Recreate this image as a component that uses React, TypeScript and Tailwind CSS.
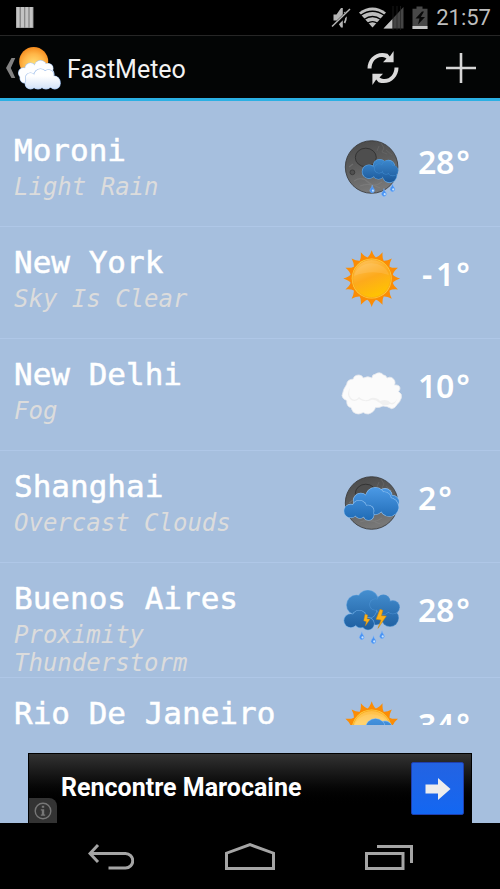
import type { ReactNode } from "react";

type Blob = [number, number, number];

const SUN_X = 30.7;
const SUN_Y = 29.6;

// 16 spikes around the disc, slightly concave on both sides
const sunRays = Array.from({ length: 16 }, (_, i) => {
	const step = Math.PI / 8;
	const point = (angle: number, r: number) =>
		`${(SUN_X + r * Math.sin(angle)).toFixed(2)} ${(SUN_Y - r * Math.cos(angle)).toFixed(2)}`;
	const a = i * step;
	return `${i === 0 ? "M" : "L"}${point(a - step / 2, 21.5)} Q${point(a - step / 5, 23)} ${point(a, 28.4)} Q${point(a + step / 5, 23)} ${point(a + step / 2, 21.5)}`;
}).join(" ");

const Defs = () => (
	<svg width="0" height="0" className="absolute" aria-hidden="true">
		<defs>
			<linearGradient id="moon" x1="0" y1="0" x2="0.3" y2="1">
				<stop offset="0" stopColor="#484848" />
				<stop offset="0.5" stopColor="#5c5c5c" />
				<stop offset="1" stopColor="#777777" />
			</linearGradient>
			<linearGradient id="blue" gradientUnits="userSpaceOnUse" x1="0" y1="14" x2="0" y2="48">
				<stop offset="0" stopColor="#4c9ae6" />
				<stop offset="1" stopColor="#1f6ab4" />
			</linearGradient>
			<linearGradient id="rainBlue" gradientUnits="userSpaceOnUse" x1="0" y1="22" x2="0" y2="46">
				<stop offset="0" stopColor="#3d8ad0" />
				<stop offset="1" stopColor="#1a5697" />
			</linearGradient>
			<linearGradient id="darkBlue" gradientUnits="userSpaceOnUse" x1="0" y1="5" x2="0" y2="48">
				<stop offset="0" stopColor="#458fd0" />
				<stop offset="1" stopColor="#1a5a9c" />
			</linearGradient>
			<linearGradient id="sunDisc" x1="0.2" y1="0" x2="0.6" y2="1">
				<stop offset="0" stopColor="#fdc25a" />
				<stop offset="0.5" stopColor="#fdaa1c" />
				<stop offset="1" stopColor="#ffc400" />
			</linearGradient>
			<linearGradient id="paleSun" x1="0" y1="0" x2="0" y2="1">
				<stop offset="0" stopColor="#ffbf45" />
				<stop offset="0.4" stopColor="#ffd166" />
				<stop offset="1" stopColor="#ffb000" />
			</linearGradient>
			<radialGradient id="logoSun" cx="0.5" cy="0.6" r="0.6">
				<stop offset="0" stopColor="#ffe27a" />
				<stop offset="0.6" stopColor="#ffb648" />
				<stop offset="1" stopColor="#f58a1c" />
			</radialGradient>
			<linearGradient id="logoCloud" gradientUnits="userSpaceOnUse" x1="0" y1="24" x2="0" y2="44">
				<stop offset="0.3" stopColor="#ffffff" />
				<stop offset="1" stopColor="#cfe0f7" />
			</linearGradient>
		</defs>
	</svg>
);

const Cloud = ({ blobs, fill = "url(#blue)", edge = "#8fc0f0" }: { blobs: Blob[]; fill?: string; edge?: string }) => (
	<g>
		{blobs.map(([x, y, r]) => (
			<circle key={`e${x}-${y}`} cx={x} cy={y} r={r} fill={edge} />
		))}
		{blobs.map(([x, y, r]) => (
			<circle key={`f${x}-${y}`} cx={x} cy={y} r={r - 0.6} fill={fill} />
		))}
	</g>
);

const Moon = () => (
	<g>
		<circle cx="30.6" cy="30" r="26.3" fill="url(#moon)" stroke="#343434" strokeWidth="0.8" />
		<path d="M40 6l3 5-2 4 5 2M45 13l6 5M38 9l-2 5" stroke="#6a6a6a" strokeWidth="1" fill="none" opacity="0.6" />
		<path d="M13 44q8-5 14 1t14 0M19 49q10-4 20 2M8 30l4-3" stroke="#8a8a8a" strokeWidth="1.2" fill="none" opacity="0.4" />
		<ellipse cx="24.8" cy="20.5" rx="10.5" ry="9.3" fill="#4e4e4e" stroke="#303030" strokeWidth="0.9" />
		<circle cx="11.4" cy="35.3" r="2.4" fill="#505050" stroke="#333333" strokeWidth="0.8" />
	</g>
);

const Drop = ({ x, y }: { x: number; y: number }) => (
	<g>
		<path d={`M${x} ${y - 4}Q${x + 0.4} ${y - 1.6} ${x + 1.9} ${y}A2.4 2.4 0 1 1 ${x - 1.9} ${y}Q${x - 0.4} ${y - 1.6} ${x} ${y - 4}Z`} fill="#4692f4" stroke="#86b8f8" strokeWidth="0.4" />
		<circle cx={x + 0.7} cy={y + 1.7} r="1.1" fill="#c5e2ff" />
	</g>
);

const Sun = ({ disc }: { disc: string }) => (
	<g>
		<path d={`${sunRays}Z`} fill="#fb8c05" />
		<circle cx={SUN_X} cy={SUN_Y} r="20" fill="#ffd23f" />
		<circle cx={SUN_X} cy={SUN_Y} r="19" fill={disc} stroke="#f59a16" strokeWidth="0.6" />
		<path d="M13 27a18 16 0 0 1 35-1q-17-6-35 1Z" fill="#ffffff" opacity="0.1" />
	</g>
);

const FOG = "M1 34.7Q2 28 5.7 23.3Q6 18.5 12.3 18Q13 14 18 14Q21 14 22.3 17Q27 14.5 31 17Q31 13.5 34 13.3Q39 10 42.5 14Q45 14 46 17Q51 14.5 53.7 19.7Q54.5 22 53.5 24Q58.5 23.5 59 27Q59 29 57.5 30.5Q61.5 33 60.3 37Q59 41 56.3 43.3Q54 47.5 50.7 47.7Q46 45 42 45Q38 47 34.5 46.5Q33 51.5 27.3 53Q24.5 53 22.3 51.5Q17 54 15 52.5Q11.5 52 10 46.5Q5.5 46 5.7 39.5Q1.5 38 1 34.7Z";

const MoonRain = () => (
	<>
		<Moon />
		<Cloud blobs={[[28, 34.7, 7.2], [38.7, 28.9, 7], [47.5, 29.4, 6.6], [48.6, 38.3, 7.6], [37.5, 36.3, 6.2]]} fill="url(#rainBlue)" edge="#5fa5e4" />
		<Cloud blobs={[[38, 31.5, 5], [46, 29.4, 5.8], [51.8, 33.6, 5.6], [45, 33.5, 4]]} fill="url(#rainBlue)" edge="#3f88cc" />
		<Drop x={31.2} y={52} />
		<Drop x={43} y={55.5} />
		<Drop x={51.5} y={50.7} />
	</>
);

const Fog = () => (
	<>
		<path d={FOG} fill="#fbfbfb" stroke="#e6e9ed" strokeWidth="0.8" />
		<path d="M9 27Q7 34 10 37Q14 41 18 36Q24 42 30 37Q36 36 39 40Q46 37 50 42Q54 42 56 38Q54 45 49 43Q43 46 38 41.500Q34 38 30 39Q24 42 18 38Q13 42 9 38Q5 33 9 27Z" fill="#f0f0f0" />
	</>
);

const MoonClouds = () => (
	<>
		<Moon />
		<Cloud blobs={[[44, 22.5, 7.4], [51.5, 29, 7]]} />
		<Cloud blobs={[[19.8, 27.5, 7.8], [34.3, 24.2, 10.2], [43.2, 26, 7.5], [48.3, 34, 9.8], [34, 33, 9], [24, 34, 7]]} />
		<Cloud blobs={[[9.8, 38, 7.2], [18.3, 34.8, 7.8], [27, 38, 6.3], [27.6, 41.8, 5.8], [19, 39.8, 6]]} />
	</>
);

const Storm = () => (
	<>
		<Cloud blobs={[[49, 33, 8.8], [35, 31, 9]]} fill="url(#darkBlue)" edge="#3f83c2" />
		<Cloud blobs={[[15.5, 20, 10.3], [26.8, 15.7, 10.8], [27, 25, 9]]} fill="url(#darkBlue)" edge="#5fa0dc" />
		<Cloud blobs={[[34.3, 19.5, 6], [42.4, 16.5, 7], [51.8, 22.3, 7], [42, 23, 7]]} fill="url(#darkBlue)" edge="#4a8fd0" />
		<Cloud blobs={[[9.8, 35.6, 7.2], [18.2, 32.8, 7.8], [27, 38.7, 6.6], [19.5, 37, 6.2]]} fill="url(#darkBlue)" edge="#6aaae4" />
		<path d="M39 24.3l2.9 1-1.5 5.4 5 .3L37 43.3 40 35l-5-.7z" fill="#fbb11a" stroke="#c98208" strokeWidth="0.5" />
		<path d="M24 29.3l2.7.7-.7 3.7 3 .6-4.7 6.7 1-4.3-2.6-1z" fill="#fbb11a" stroke="#c98208" strokeWidth="0.4" />
		<Drop x={20.8} y={50.7} />
		<Drop x={32.5} y={54.7} />
		<Drop x={41} y={49.7} />
	</>
);

const SunCloud = () => (
	<>
		<Sun disc="url(#paleSun)" />
		<Cloud blobs={[[44, 28, 7.4], [51, 34, 7]]} />
		<Cloud blobs={[[19.8, 34, 7.8], [34.5, 28.4, 10.2], [48.3, 38, 9.8], [34, 38, 9]]} />
	</>
);

type City = { name: string; sky?: string; temp: string; icon: ReactNode };

const cities: City[] = [
	{ name: "Moroni", sky: "Light Rain", temp: "28°", icon: <MoonRain /> },
	{ name: "New York", sky: "Sky Is Clear", temp: "-1°", icon: <Sun disc="url(#sunDisc)" /> },
	{ name: "New Delhi", sky: "Fog", temp: "10°", icon: <Fog /> },
	{ name: "Shanghai", sky: "Overcast Clouds", temp: "2°", icon: <MoonClouds /> },
	{ name: "Buenos Aires", sky: "Proximity Thunderstorm", temp: "28°", icon: <Storm /> },
	{ name: "Rio De Janeiro", temp: "34°", icon: <SunCloud /> },
];

const StatusBar = () => (
	<div className="flex h-9 shrink-0 items-center justify-between border-b border-[#262626] bg-black pl-4 pr-[9px]">
		<svg width="18" height="22" viewBox="0 0 18 22" aria-hidden="true">
			<path d="M0 0h17.500v21H0z" fill="#8a8a8a" />
			<path d="M.5 0h3v20.500h-3zM5 0h3v20.500H5zM9.300 0h3v20.500h-3zM13.700 0h3v20.500h-3z" fill="#c4c4c4" />
		</svg>
		<div className="flex items-center gap-2">
			<svg width="74" height="24" viewBox="0 0 74 24" aria-hidden="true">
				{/* muted speaker */}
				<path d="M3.500 8.500h3l4.500-6.500h1.800v19.500H11L6.500 14.500h-3z" fill="#b5b5b5" />
				<path d="M14.500 6q3 5.500 0 11" stroke="#b5b5b5" strokeWidth="1.800" fill="none" />
				<path d="M2.500 21.500L20.500 4" stroke="#000000" strokeWidth="4" />
				<path d="M2 20.500L20 3" stroke="#b5b5b5" strokeWidth="1.500" />
				{/* wifi */}
				<path d="M42.500 21.500L29 6.500Q42.500-3.500 56 6.500Z" fill="#bdbdbd" />
				<path d="M30.500 9.500q12-8.500 24 0M34 13.500q8.500-6 17 0M37.500 17.300q5-3.400 10 0" stroke="#000000" strokeWidth="1.300" fill="none" />
				{/* mobile signal */}
				<path d="M73.500 1v21.500H53.500z" fill="#454545" />
				<path d="M62.500 13v9.500h-9z" fill="#c6c6c6" />
				<path d="M63 0v24M67 0v24M70.500 0v24" stroke="#222222" strokeWidth="0.700" />
			</svg>
			<svg width="16" height="24" viewBox="0 0 16 24" aria-hidden="true">
				<path d="M4.500.5h6v2.200h5v20.300H.5V2.700h4z" fill="#484848" />
				<path d="M.5 20h15v3H.5z" fill="#c6c6c6" />
				<path d="M10 5.500L3.500 12.500h4L6 18.500l7-7.500H8.800l3.200-5.500z" fill="#080808" />
			</svg>
			<time className="font-['Roboto',sans-serif] text-[22px] leading-7 text-[#bebebe]">21:57</time>
		</div>
	</div>
);

const ActionBar = () => (
	<header className="flex h-[65px] shrink-0 items-stretch justify-between border-b-[3px] border-[#2bb0e4] bg-[#030505] pt-[2px]">
		<a href="#up" className="flex items-center gap-[2px] pl-[6px] font-['Roboto',sans-serif] text-[25px] leading-8 text-[#f3f3f3]">
			<svg width="10" height="20" viewBox="0 0 10 20" aria-hidden="true">
				<path d="M5.500 0h3.800L4.800 10l4.500 10H5.500L0 10z" fill="#828282" />
			</svg>
			<svg width="44" height="45" viewBox="0 0 44 45" aria-hidden="true">
				<circle cx="15.700" cy="15.500" r="14.500" fill="url(#logoSun)" />
				<Cloud blobs={[[5.700, 27, 5.700], [12.500, 22.500, 6], [22.500, 20.500, 6.500], [30, 22.500, 5.500], [31, 28, 5.500], [7, 32, 5.500], [18, 29, 8]]} fill="#fdfeff" edge="#a9c6ee" />
				<Cloud blobs={[[12.500, 32, 5.500], [22.500, 29.500, 7], [30.500, 29, 5.800], [36, 36, 6.500], [12.500, 37.500, 5.900], [20, 36.500, 6.900], [28, 36.500, 6.900], [36.800, 37.500, 5.900]]} fill="url(#logoCloud)" edge="#9dbdea" />
			</svg>
			<span className="pl-[3px] pt-1">FastMeteo</span>
		</a>
		<div className="flex">
			<button type="button" aria-label="Refresh" className="flex w-[78px] items-center justify-center">
				<svg width="32" height="34" viewBox="0 0 32 34" aria-hidden="true">
					<g fill="#dadada">
						<path d="M.5 17.500C.5 7 10-.8 20.500 2.800L22.800 5.400 26.600 0v11.200H16L19.500 7.500C12 3 4.500 9 4.500 17.500z" />
						<path d="M31.500 16.500C31.500 27 22 34.800 11.500 31.200L9.200 28.600 5.400 34V22.800H16L12.500 26.500C20 31 27.500 25 27.500 16.500z" />
					</g>
				</svg>
			</button>
			<button type="button" aria-label="Add city" className="flex w-[78px] items-center justify-center">
				<svg width="30" height="30" viewBox="0 0 30 30" aria-hidden="true">
					<path d="M15 0v30M0 15h30" stroke="#d6d6d6" strokeWidth="2.600" />
				</svg>
			</button>
		</div>
	</header>
);

const CityRow = ({ name, sky, temp, icon }: City) => (
	<li className="flex min-h-[112px] items-start border-b border-[#afc7e7] pl-[14px]">
		<div className="min-w-0 flex-1 pr-8 pt-[17px] font-['DejaVu_Sans_Mono',monospace]">
			<h2 className="text-[31px] leading-9 text-white [-webkit-text-stroke:0.5px_white]">{name}</h2>
			{sky && <p className="mt-[5px] text-[24px] italic leading-7 text-[#dcdcdc]">{sky}</p>}
		</div>
		<svg width="61" height="60" viewBox="0 0 61 60" className="mt-[22px] shrink-0" aria-hidden="true">
			{icon}
		</svg>
		<div className="flex w-[98px] shrink-0 pl-4 pt-[29px] font-['Noto_Sans',sans-serif] text-[32px] font-semibold leading-9 text-white">
			{temp.split("").map((char, i) => (
				<span key={i} className="w-[18px] text-center">
					{char}
				</span>
			))}
		</div>
	</li>
);

const AdBanner = () => (
	<aside className="relative mx-7 mt-7 flex h-[70px] shrink-0 items-center justify-between border border-b-0 border-black bg-linear-to-b from-[#333333] to-black to-80% pl-8 pr-[7px]">
		<a href="#ad" className="pb-[2px] font-['Roboto',sans-serif] text-[25px] font-bold leading-8 text-white">
			Rencontre Marocaine
		</a>
		<button type="button" aria-label="Open ad" className="flex size-[53px] items-center justify-center rounded-xs border border-[#1f3fae] bg-linear-to-b from-[#2363e2] to-[#1267f2]">
			<svg width="26" height="22" viewBox="0 0 26 22" aria-hidden="true">
				<path d="M.5 6.500h12.500V0l12.500 11L13 22v-6.500H.5z" fill="#ededed" />
			</svg>
		</button>
		<button type="button" aria-label="About this ad" className="absolute bottom-0 left-0 flex h-[25px] w-7 items-center justify-center rounded-tr-lg bg-[#333333]">
			<svg width="18" height="18" viewBox="0 0 18 18" aria-hidden="true">
				<circle cx="9" cy="9" r="7.800" fill="none" stroke="#777777" strokeWidth="1.400" />
				<path d="M7.800 3.800h2.400v2H7.800zM6.800 7.300h3.400v5.200h1v1.300H6.800v-1.300h1V8.600h-1z" fill="#777777" />
			</svg>
		</button>
	</aside>
);

const NavBar = () => (
	<nav className="grid h-[66px] shrink-0 grid-cols-3 bg-black px-[41px] pt-[2px]">
		<button type="button" aria-label="Back" className="flex items-center justify-center">
			<svg width="46" height="28" viewBox="0 0 46 28" fill="none" stroke="#a5a5a5" strokeWidth="3" aria-hidden="true">
				<path d="M10 2L2 10.500l8 8.500M2 10.500h35.500a7 7 0 0 1 0 14.500H20.500" />
			</svg>
		</button>
		<button type="button" aria-label="Home" className="flex items-center justify-center">
			<svg width="50" height="28" viewBox="0 0 50 28" fill="none" stroke="#a5a5a5" strokeWidth="3" aria-hidden="true">
				<path d="M1.500 25.500V10.200L25 1.700l23.500 8.500v15.300z" />
			</svg>
		</button>
		<button type="button" aria-label="Recent apps" className="flex items-center justify-center">
			<svg width="48" height="28" viewBox="0 0 48 28" fill="none" stroke="#a5a5a5" strokeWidth="3" aria-hidden="true">
				<path d="M1.500 10.500h36.500v15H1.500zM12 3.500h34.500V20" />
			</svg>
		</button>
	</nav>
);

export default function App() {
	return (
		<div className="flex h-screen w-full flex-col bg-[#a6bfde]">
			<Defs />
			<StatusBar />
			<ActionBar />
			<main className="min-h-0 flex-1 overflow-y-auto pt-[14px] [scrollbar-width:none]">
				<ul>
					{cities.map((city) => (
						<CityRow key={city.name} {...city} />
					))}
				</ul>
			</main>
			<AdBanner />
			<NavBar />
		</div>
	);
}
